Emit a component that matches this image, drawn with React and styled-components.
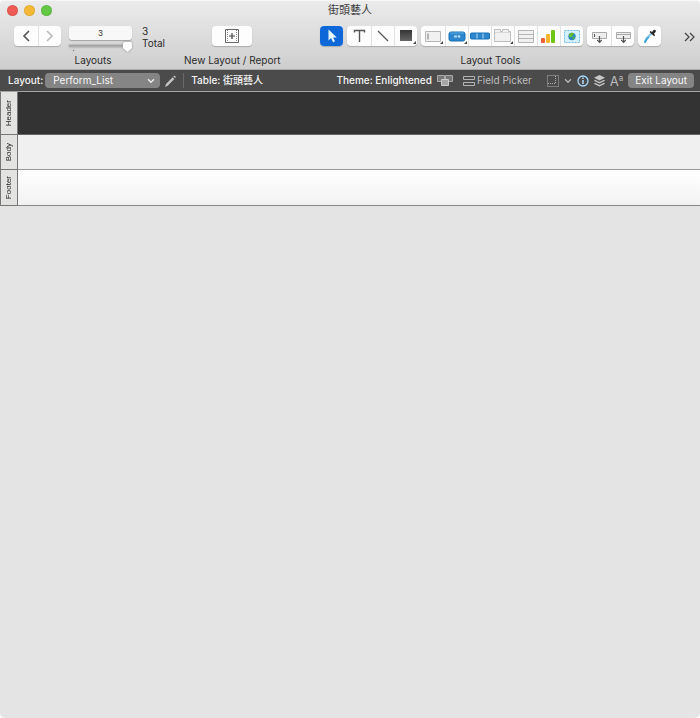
import React, { useState } from "react";
import styled, { createGlobalStyle, css } from "styled-components";

const GlobalStyle = createGlobalStyle`
  * {
    box-sizing: border-box;
  }

  body {
    margin: 0;
    background: #fff;
  }

  body,
  button,
  input,
  select {
    font-family: Inter, "Noto Sans CJK TC", sans-serif;
  }
`;

const Window = styled.main`
  display: flex;
  flex-direction: column;
  min-height: 100vh;
  background: #e4e4e4;
  border-radius: 5px;
  overflow: hidden;
  color: #2b2b2b;
  cursor: default;
`;

const Chrome = styled.header`
  background: linear-gradient(#ebebeb, #cecece);
  border-top: 1px solid #f6f6f6;
  border-bottom: 1px solid #aaa;
`;

const TitleBar = styled.div`
  display: grid;
  grid-template-columns: 1fr auto 1fr;
  align-items: center;
  height: 18px;
  padding: 0 7px;
`;

const Lights = styled.div`
  display: flex;
  gap: 6px;
`;

const Light = styled.button`
  width: 11px;
  height: 11px;
  padding: 0;
  border: 1px solid rgba(0, 0, 0, 0.08);
  border-radius: 50%;
  background: ${({ $color }) => $color};
`;

const Title = styled.h1`
  margin: 0;
  font-size: 11px;
  line-height: 18px;
  font-weight: 400;
  color: #3a3a3a;
`;

const Toolbar = styled.div`
  display: flex;
  align-items: flex-start;
  height: 50px;
  padding: 6px 5px 0 14px;
`;

const ToolSection = styled.section`
  display: flex;
  flex-direction: column;
  align-items: center;
  margin-left: ${({ $push }) => ($push ? "auto" : "12px")};

  &:first-child {
    margin-left: 0;
  }
`;

const SectionLabel = styled.span`
  font-size: 10px;
  line-height: 14px;
  white-space: nowrap;
`;

const ButtonRow = styled.div`
  display: flex;
  align-items: flex-start;
  gap: ${({ $gap }) => $gap || "0"};
  height: 28px;
`;

const Segment = styled.div`
  display: flex;
  height: 20px;
  margin-top: 1px;
  background: #fdfdfd;
  border-radius: 4px;
  box-shadow: 0 1px 1px rgba(0, 0, 0, 0.2);
  overflow: hidden;
`;

const ToolButton = styled.button`
  display: flex;
  align-items: center;
  justify-content: center;
  width: ${({ $wide }) => ($wide ? "40px" : "23px")};
  height: 20px;
  padding: 0;
  border: 0;
  background: ${({ $active }) => ($active ? "#0f68d8" : "transparent")};

  &:first-child:not(:only-child) {
    width: 24px;
  }

  & + & {
    border-left: 1px solid #e2e2e2;
  }

  svg {
    display: block;
    flex: none;
  }
`;

const RecordControl = styled.div`
  display: flex;
  flex-direction: column;
  align-items: center;
  width: 63px;
`;

const RecordInput = styled.input`
  width: 63px;
  height: 14px;
  margin-top: 1px;
  padding: 0;
  border: 0;
  border-radius: 3px;
  background: #f8f8f8;
  box-shadow: 0 1px 1px rgba(0, 0, 0, 0.25);
  font-size: 8px;
  line-height: 14px;
  text-align: center;
  color: #333;
`;

const thumb = css`
  width: 9px;
  height: 10px;
  border: 0;
  border-radius: 2px;
  background: #fff;
  clip-path: polygon(0 0, 100% 0, 100% 60%, 50% 100%, 0 60%);
`;

const Slider = styled.input`
  appearance: none;
  width: 63px;
  height: 10px;
  margin: 2px 0 0;
  background:
    linear-gradient(#777, #777) 4px 8px / 1px 1px no-repeat,
    linear-gradient(#9c9c9c, #b4b4b4) center 3px / 100% 2px no-repeat;
  filter: drop-shadow(0 0 1px rgba(0, 0, 0, 0.35));

  &::-webkit-slider-thumb {
    appearance: none;
    ${thumb}
  }

  &::-moz-range-thumb {
    ${thumb}
  }
`;

const Count = styled.p`
  width: 30px;
  margin: 0 0 0 2px;
  font-size: 10px;
  line-height: 12px;
`;

const Overflow = styled.button`
  display: flex;
  align-items: center;
  height: 24px;
  margin-left: 23px;
  padding: 0;
  border: 0;
  background: none;
`;

const LayoutBar = styled.nav`
  display: flex;
  align-items: center;
  height: 21px;
  padding: 0 6px 0 8px;
  background: #4b4b4b;
  color: #f4f4f4;
  font-size: 10px;
  line-height: 15px;
  white-space: nowrap;
`;

const BarLabel = styled.label`
  margin-right: 2px;
  font-weight: 500;
`;

const BarText = styled.span`
  font-weight: 500;
`;

const SelectWrap = styled.div`
  display: grid;
  align-items: center;
  width: 115px;
  margin-right: 5px;

  > * {
    grid-area: 1 / 1;
  }

  svg {
    justify-self: end;
    margin-right: 5px;
    pointer-events: none;
  }
`;

const Select = styled.select`
  appearance: none;
  width: 100%;
  height: 15px;
  padding: 0 8px;
  border: 0;
  border-radius: 4px;
  background: #858585;
  color: #f7f7f7;
  font-size: 10px;
  line-height: 15px;
`;

const Divider = styled.span`
  width: 1px;
  height: 15px;
  margin: 0 7px;
  background: #6a6a6a;
`;

const BarButton = styled.button`
  display: flex;
  align-items: center;
  gap: 2px;
  padding: 0;
  border: 0;
  background: none;
  color: #bdbdbd;
  font-size: 10px;
  line-height: 15px;
`;

const BarTools = styled.div`
  display: flex;
  align-items: center;
  gap: 5px;
  margin-left: auto;
`;

const PickerButton = styled(BarButton)`
  margin: 0 10px 0 5px;
`;

const ExitButton = styled.button`
  height: 15px;
  padding: 0 7px;
  border: 0;
  border-radius: 4px;
  background: #858585;
  color: #f7f7f7;
  font-size: 10px;
  line-height: 15px;
`;

const Canvas = styled.div`
  border-top: 1px solid #a3a3a3;
`;

const Part = styled.section`
  display: flex;
  height: ${({ $height }) => $height};
`;

const PartTab = styled.button`
  display: flex;
  align-items: center;
  justify-content: center;
  width: 18px;
  padding: 0;
  border: 1px solid #777;
  border-top: 0;
  background: #e3e3e1;
  color: #222;
`;

const TabText = styled.span`
  writing-mode: vertical-rl;
  transform: rotate(180deg);
  font-family: "Liberation Sans", Arial, sans-serif;
  font-size: 8px;
  line-height: 12px;
`;

const PartArea = styled.div`
  flex: 1;
  background: ${({ $fill }) => $fill};
  border-bottom: 1px solid ${({ $line }) => $line};
`;

const Chevron = ({ color = "#eee" }) => (
  <svg width="8" height="6" viewBox="0 0 8 6" fill="none" stroke={color} strokeWidth="1.3">
    <path d="M1 1.3 4 4.3 7 1.3" />
  </svg>
);

const Icon = ({ children }) => (
  <svg width="22" height="20" viewBox="0 0 22 20" fill="none">
    {children}
  </svg>
);

const Corner = () => <path d="M21 15v3h-3z" fill="#444" />;

const PointerIcon = () => (
  <Icon>
    <path d="M7.500 3.500v11l2.600-2.400 1.900 4.100 2-.9-1.900-3.900h3.700z" fill="#e9f8ff" />
  </Icon>
);

const TextIcon = () => (
  <Icon>
    <path d="M6.500 6.500V4.500h10v2M11.500 4.500V16" stroke="#555" strokeWidth="1.400" />
  </Icon>
);

const LineIcon = () => (
  <Icon>
    <path d="M6 5 16 15" stroke="#555" strokeWidth="1.200" />
  </Icon>
);

const ShapeIcon = () => (
  <Icon>
    <defs>
      <linearGradient id="shape" x2="0" y2="1">
        <stop stopColor="#343434" />
        <stop offset="1" stopColor="#666" />
      </linearGradient>
    </defs>
    <path d="M5 4h12v11H5z" fill="url(#shape)" />
    <Corner />
  </Icon>
);

const FieldIcon = () => (
  <Icon>
    <path d="M3.500 5.500h15v10h-15z" fill="#f1f1f1" stroke="#b5b5b5" />
    <path d="M6 7.500v6" stroke="#777" />
    <Corner />
  </Icon>
);

const PillIcon = () => (
  <Icon>
    <rect x="3" y="6" width="16" height="9" rx="2" fill="#2b86cd" stroke="#1970b5" />
    <path d="M4 7h14" stroke="#5aabe3" />
    <path d="M8.500 9.700h2v1.500h-2zM12 9.700h2v1.500h-2z" fill="#91c7ee" stroke="#d4ebfa" strokeWidth=".6" />
    <Corner />
  </Icon>
);

const ButtonBarIcon = () => (
  <Icon>
    <rect x="1.500" y="7" width="19" height="6" rx="1" fill="#2b86cd" stroke="#1970b5" />
    <path d="M8 7.500v5M14 7.500v5" stroke="#b7dcf5" />
  </Icon>
);

const TabIcon = () => (
  <Icon>
    <path d="M2.500 15.500v-12h6v2h2v-2h6v2h2v10z" fill="#f1f1f1" stroke="#bcbcbc" />
    <path d="M3 6.500h15" stroke="#d8d8d8" />
    <Corner />
  </Icon>
);

const PortalIcon = () => (
  <Icon>
    <path d="M3.500 4.500h15v12h-15z" fill="#f1f1f1" stroke="#b5b5b5" />
    <path d="M3.500 8.500h15M3.500 12.500h15" stroke="#b5b5b5" />
  </Icon>
);

const ChartIcon = () => (
  <Icon>
    <rect x="3" y="12" width="4" height="5" rx="1" fill="#ee6232" />
    <rect x="8" y="8" width="4" height="9" rx="1" fill="#f5b62c" />
    <rect x="13" y="4" width="4" height="13" rx="1" fill="#6ec717" />
  </Icon>
);

const WebIcon = () => (
  <Icon>
    <path d="M3.500 4.500h15v12h-15z" fill="#d5effb" stroke="#72bbe4" strokeDasharray="2 1" />
    <circle cx="11" cy="10.500" r="3.700" fill="#2687c5" />
    <path d="M8 8.500c1-2 4-2.500 5-1 .5 1-1.500 1-1.500 2.500s-2.500 1.500-3.500.5zM12 10.500l2 .5-1 2-1.500.5z" fill="#65ba35" />
  </Icon>
);

const FieldDropIcon = () => (
  <Icon>
    <path d="M4.500 6.500h14v6h-14z" fill="#eee" stroke="#aaa" />
    <path d="M6.500 8v3" stroke="#555" />
    <path d="M11.500 10v6M9.300 14l2.200 2.300 2.200-2.300" stroke="#555" strokeWidth="1.200" />
  </Icon>
);

const PartDropIcon = () => (
  <Icon>
    <path d="M4.500 6.500h14v6h-14z" fill="#eee" stroke="#aaa" />
    <path d="M4.500 8.500h14" stroke="#aaa" />
    <path d="M11.500 10v6M9.300 14l2.200 2.300 2.200-2.300" stroke="#555" strokeWidth="1.200" />
  </Icon>
);

const DropperIcon = () => (
  <Icon>
    <path d="M12.500 7.500 7.500 12.500 6 16" stroke="#8fc6df" strokeWidth="2.200" strokeLinecap="round" />
    <path d="M9.500 11.500 7.500 13.500l-1.500 2.500" stroke="#36a5dc" strokeWidth="1.700" strokeLinecap="round" />
    <path d="m10.500 6 1-1 1.500 1 1.600-1.900c1.200-1.200 3.100.4 2 1.800L15 7.800l1.100 1.500-1 1z" fill="#292929" />
  </Icon>
);

const NewLayoutIcon = () => (
  <svg width="14" height="14" viewBox="0 0 14 14" fill="none">
    <path d="M.5.500h13v13H.500z" stroke="#666" />
    <path d="M2.500 1v12M11.500 1v12" stroke="#888" strokeDasharray="1 1" />
    <path d="M7 4v6M4 7h6" stroke="#444" strokeWidth="1.200" />
  </svg>
);

const ArrowIcon = ({ flip, color }) => (
  <svg width="8" height="12" viewBox="0 0 8 12" fill="none" stroke={color} strokeWidth="1.600">
    <path d={flip ? "m1 1 5 5-5 5" : "M7 1 2 6l5 5"} />
  </svg>
);

const PencilIcon = () => (
  <svg width="11" height="12" viewBox="0 0 11 12" fill="#c4c4c4">
    <path d="m0 12 1-3 6.700-6.800 1.700 1.700L2.700 10.800zM8.300 1.500 9.500.4l1.500 1.500-1 1.200z" />
  </svg>
);

const ThemeIcon = () => (
  <svg width="16" height="12" viewBox="0 0 16 12" stroke="#aaa">
    <path d="M.5.500h7v6h-7zM8.500.500h7v6h-7z" fill="#777" />
    <path d="M4.500 4.500h7v6h-7z" fill="#a6a6a6" stroke="#ccc" />
  </svg>
);

const PickerIcon = () => (
  <svg width="12" height="12" viewBox="0 0 12 12" fill="none" stroke="#b5b5b5">
    <path d="M.5 1.500h11v3H.5zM.5 7.500h11v3H.5z" />
  </svg>
);

const GridIcon = () => (
  <svg width="12" height="12" viewBox="0 0 12 12" fill="none" stroke="#b0b0b0">
    <path d="M.5.500h11v11H.500z" strokeDasharray="1 1" />
    <path d="M8.500 1v7.500H1" strokeDasharray="1 1" />
  </svg>
);

const InfoIcon = () => (
  <svg width="12" height="12" viewBox="0 0 12 12" fill="none" stroke="#a9d8fb">
    <circle cx="6" cy="6" r="5" strokeWidth="1.300" />
    <path d="M6 5v4M6 2.600V4" strokeWidth="1.600" />
  </svg>
);

const LayersIcon = () => (
  <svg width="11" height="12" viewBox="0 0 11 12" fill="#c8c8c8">
    <path d="m5.500 0 5.500 2.800-5.500 2.700L0 2.800z" />
    <path d="m1 4.800 4.500 2.200L10 4.800l1 1-5.500 2.700L0 5.800z" />
    <path d="m1 7.800 4.500 2.200L10 7.800l1 1-5.500 2.700L0 8.800z" />
  </svg>
);

const FontMark = styled.span`
  display: flex;
  font-size: 13px;
  line-height: 14px;

  small {
    font-size: 8px;
    line-height: 8px;
  }
`;

const toolGroups = [
  [["Text", TextIcon], ["Line", LineIcon], ["Shape", ShapeIcon]],
  [
    ["Field control", FieldIcon],
    ["Button", PillIcon],
    ["Button bar", ButtonBarIcon],
    ["Tab control", TabIcon],
    ["Portal", PortalIcon],
    ["Chart", ChartIcon],
    ["Web viewer", WebIcon],
  ],
  [["Insert field", FieldDropIcon], ["Insert part", PartDropIcon]],
  [["Format painter", DropperIcon]],
];

const parts = [
  { name: "Header", height: "43px", fill: "#333", line: "#666" },
  { name: "Body", height: "35px", fill: "#f0f0f0", line: "#999" },
  { name: "Footer", height: "36px", fill: "linear-gradient(#fff, #f2f2f2)", line: "#888" },
];

const App = () => {
  const [record, setRecord] = useState(3);
  const changeRecord = (event) => setRecord(Number(event.target.value));

  return (
    <>
      <GlobalStyle />
      <Window>
        <Chrome>
          <TitleBar>
            <Lights>
              <Light $color="#ed5b54" aria-label="Close" />
              <Light $color="#f5b935" aria-label="Minimize" />
              <Light $color="#63c944" aria-label="Zoom" />
            </Lights>
            <Title>街頭藝人</Title>
          </TitleBar>

          <Toolbar>
            <ToolSection>
              <ButtonRow $gap="8px">
                <Segment>
                  <ToolButton aria-label="Previous layout">
                    <ArrowIcon color="#555" />
                  </ToolButton>
                  <ToolButton aria-label="Next layout">
                    <ArrowIcon flip color="#bbb" />
                  </ToolButton>
                </Segment>
                <RecordControl>
                  <RecordInput aria-label="Layout number" value={record} onChange={changeRecord} />
                  <Slider
                    type="range"
                    min="1"
                    max="3"
                    aria-label="Layout position"
                    value={record}
                    onChange={changeRecord}
                  />
                </RecordControl>
                <Count>
                  3
                  <br />
                  Total
                </Count>
              </ButtonRow>
              <SectionLabel>Layouts</SectionLabel>
            </ToolSection>

            <ToolSection>
              <ButtonRow>
                <Segment>
                  <ToolButton $wide aria-label="New Layout / Report">
                    <NewLayoutIcon />
                  </ToolButton>
                </Segment>
              </ButtonRow>
              <SectionLabel>New Layout / Report</SectionLabel>
            </ToolSection>

            <ToolSection $push>
              <ButtonRow $gap="4px">
                <Segment>
                  <ToolButton $active aria-label="Select">
                    <PointerIcon />
                  </ToolButton>
                </Segment>
                {toolGroups.map((group) => (
                  <Segment key={group[0][0]}>
                    {group.map(([name, Drawing]) => (
                      <ToolButton key={name} aria-label={name}>
                        <Drawing />
                      </ToolButton>
                    ))}
                  </Segment>
                ))}
              </ButtonRow>
              <SectionLabel>Layout Tools</SectionLabel>
            </ToolSection>
            <Overflow aria-label="More tools">
              <svg width="11" height="10" viewBox="0 0 11 10" fill="none" stroke="#444" strokeWidth="1.200">
                <path d="m1 1 4 4-4 4M6 1l4 4-4 4" />
              </svg>
            </Overflow>
          </Toolbar>
        </Chrome>

        <LayoutBar>
          <BarLabel htmlFor="layout">Layout:</BarLabel>
          <SelectWrap>
            <Select id="layout" defaultValue="Perform_List">
              <option>Perform_List</option>
            </Select>
            <Chevron />
          </SelectWrap>
          <BarButton aria-label="Edit layout">
            <PencilIcon />
          </BarButton>
          <Divider />
          <BarText>Table: 街頭藝人</BarText>

          <BarTools>
            <BarText>Theme: Enlightened</BarText>
            <BarButton aria-label="Change theme">
              <ThemeIcon />
            </BarButton>
            <PickerButton>
              <PickerIcon />
              Field Picker
            </PickerButton>
            <BarButton aria-label="Grid">
              <GridIcon />
            </BarButton>
            <BarButton aria-label="Grid options">
              <Chevron color="#b5b5b5" />
            </BarButton>
            <BarButton aria-label="Inspector">
              <InfoIcon />
            </BarButton>
            <BarButton aria-label="Layers">
              <LayersIcon />
            </BarButton>
            <BarButton aria-label="Formatting">
              <FontMark>
                A<small>a</small>
              </FontMark>
            </BarButton>
            <ExitButton>Exit Layout</ExitButton>
          </BarTools>
        </LayoutBar>

        <Canvas>
          {parts.map(({ name, height, fill, line }) => (
            <Part key={name} $height={height}>
              <PartTab>
                <TabText>{name}</TabText>
              </PartTab>
              <PartArea $fill={fill} $line={line} />
            </Part>
          ))}
        </Canvas>
      </Window>
    </>
  );
};

export default App;
